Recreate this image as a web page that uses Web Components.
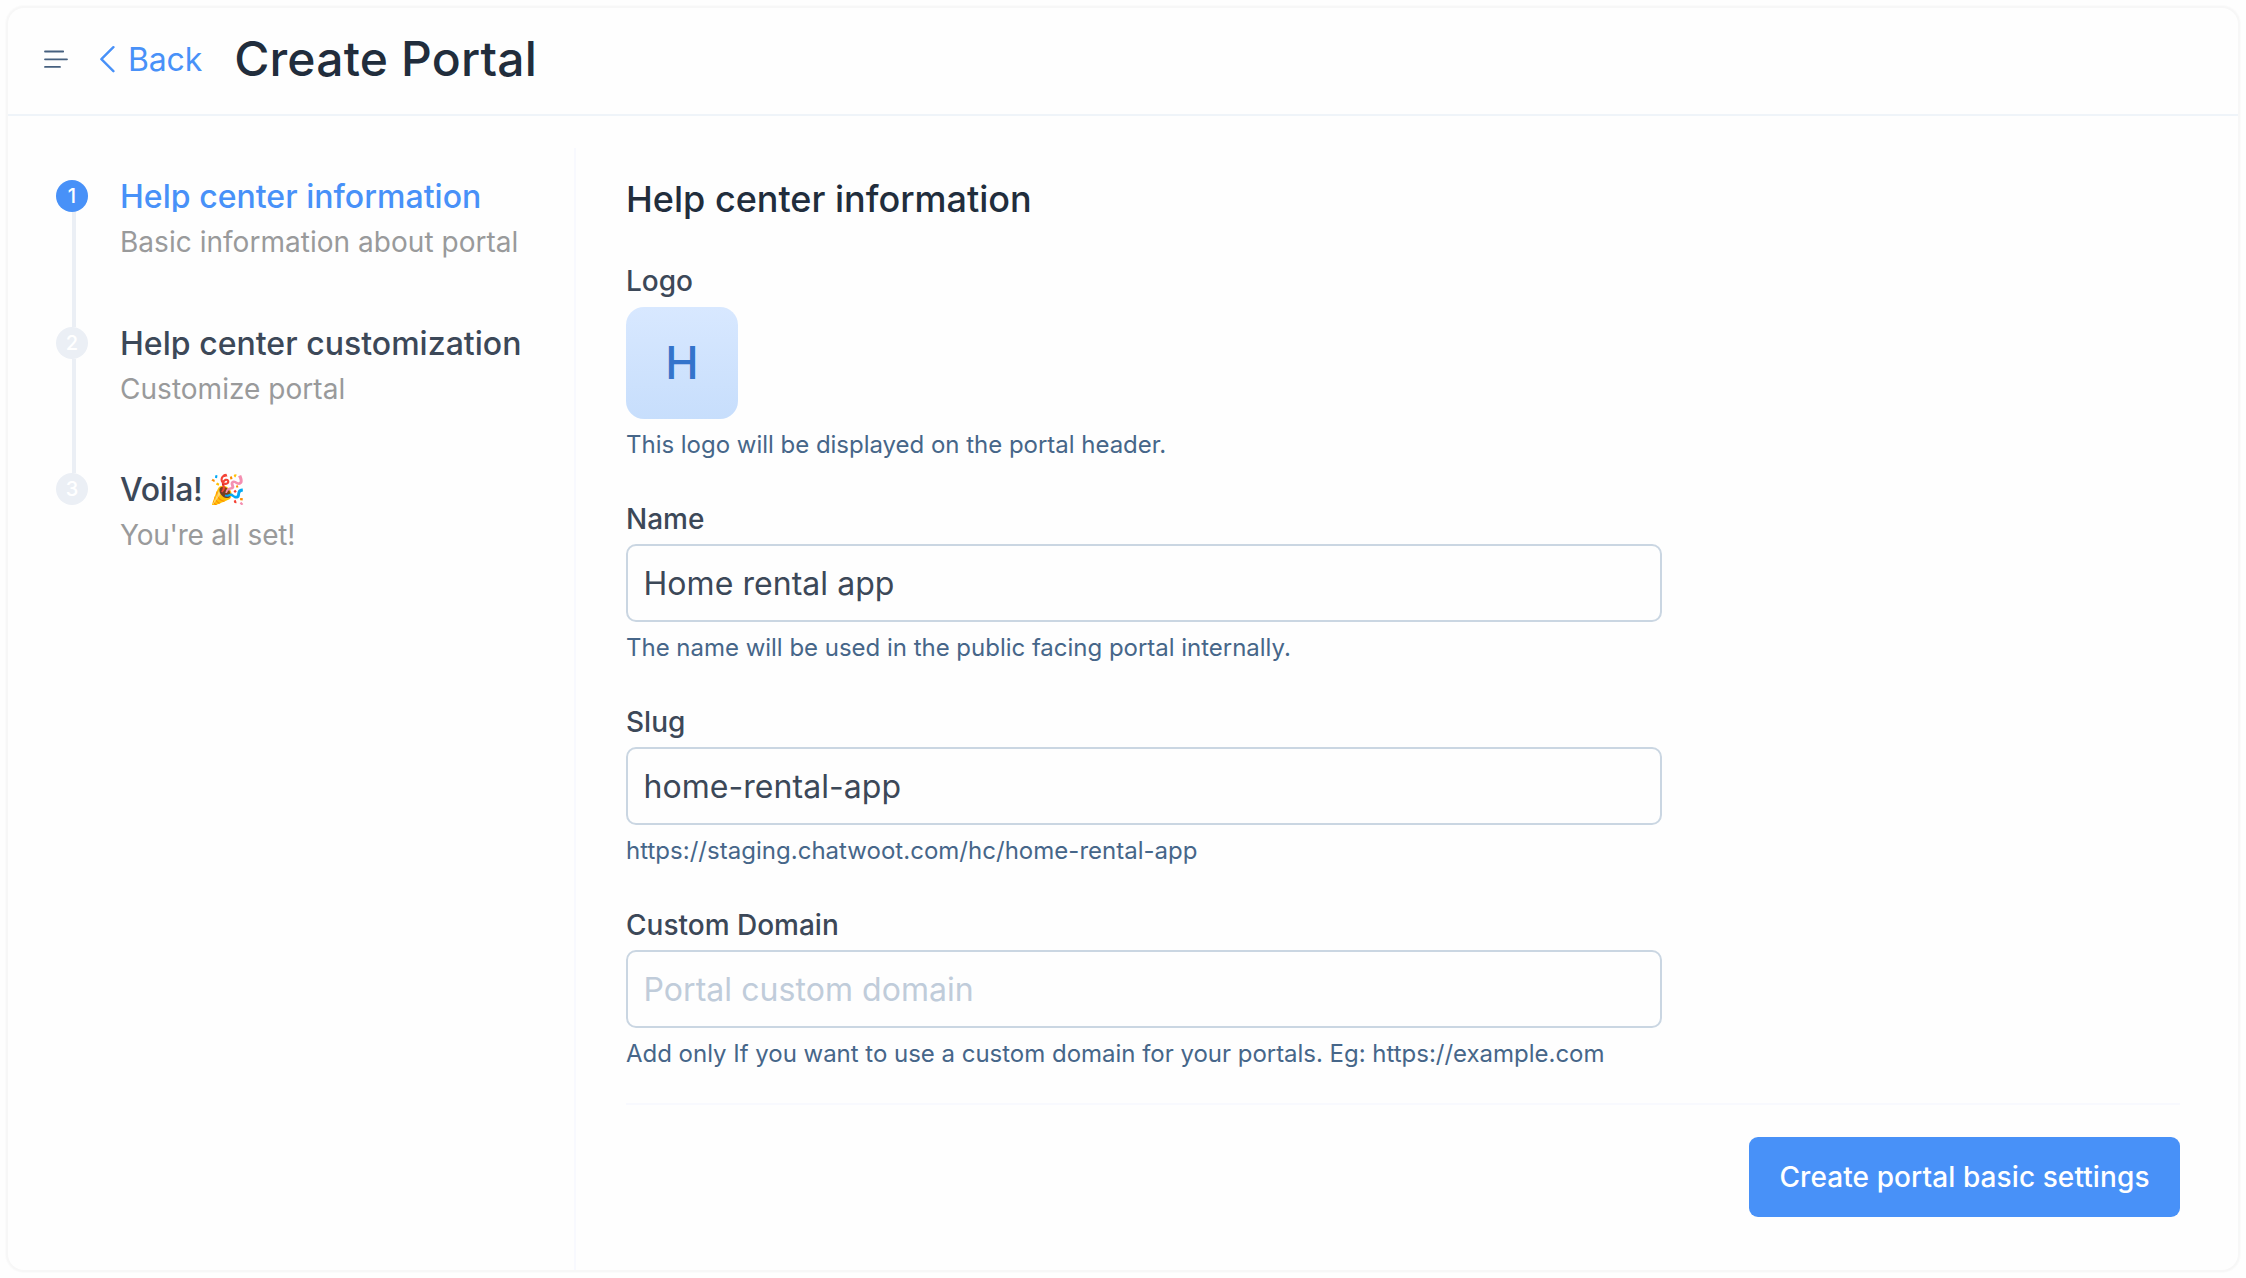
<!DOCTYPE html>
<html lang="en">
<head>
<meta charset="utf-8">
<title>Create Portal</title>
<style>
  html, body { margin: 0; height: 100%; background: #fefefe; }
  body { font-family: Inter, "Liberation Sans", sans-serif; display: flex; padding: 8px; box-sizing: border-box; }
</style>
</head>
<body>
<portal-page>
  <page-header slot="header" back="Back">Create Portal</page-header>
  <step-list slot="steps">
    <wizard-step number="1" active>Help center information<span slot="note">Basic information about portal</span></wizard-step>
    <wizard-step number="2" style="--step-height:146px">Help center customization<span slot="note">Customize portal</span></wizard-step>
    <wizard-step number="3" last><span style="letter-spacing:-.3px">Voila!</span><span style="font-size:29.5px;line-height:1;margin-left:6.5px;vertical-align:1px">🎉</span><span slot="note" style="letter-spacing:-.22px">You're all set!</span></wizard-step>
  </step-list>
  <portal-form heading="Help center information">
    <form-field label="Logo" help="This logo will be displayed on the portal header." style="--label-gap:8px"><logo-avatar>H</logo-avatar></form-field>
    <form-field label="Name" help="The name will be used in the public facing portal internally."><text-box>Home rental app</text-box></form-field>
    <form-field label="Slug" help="https://staging.chatwoot.com/hc/home-rental-app" style="--help-spacing:.02px"><text-box>home-rental-app</text-box></form-field>
    <form-field label="Custom Domain" help="Add only If you want to use a custom domain for your portals. Eg: https://example.com"><text-box empty>Portal custom domain</text-box></form-field>
    <primary-button slot="action">Create portal basic settings</primary-button>
  </portal-form>
</portal-page>
<script>
  const define = (name, render) => customElements.define(name, class extends HTMLElement {
    connectedCallback() {
      if (this.shadowRoot) return;
      this.attachShadow({ mode: 'open' }).innerHTML = render(this);
    }
  });

  define('portal-page', () => `
    <style>
      :host { flex: 1; display: flex; flex-direction: column; box-sizing: border-box; background: #fefefe;
        border-radius: 16px; box-shadow: 0 0 0 2px #f7f7f7, 0 0 0 3px #fbfbfb; overflow: hidden; }
      .body { flex: 1; display: flex; min-height: 0; }
    </style>
    <slot name="header"></slot>
    <div class="body"><slot name="steps"></slot><slot></slot></div>`);

  define('page-header', el => `
    <style>
      :host { display: flex; align-items: center; box-sizing: border-box; height: 108px; flex: none;
        padding: 0 36px 4px; border-bottom: 2px solid #eff4f9; }
      svg { display: block; flex: none; }
      .menu { margin-right: 31px; }
      .back { display: flex; align-items: center; color: #4891f8; font-size: 32px; line-height: 40px; letter-spacing: -.15px; }
      .back span { margin-left: 12px; padding-top: 2px; }
      h1 { margin: 0 0 0 32px; font-size: 48px; font-weight: 500; line-height: 58px; letter-spacing: .18px; color: #212d3c; }
    </style>
    <svg class="menu" width="25" height="20" viewBox="0 0 25 20" fill="none" stroke="#46607f" stroke-width="1.8" stroke-linecap="round">
      <path d="M1 2.5H19.2M1 10.3H23M1 17.9H16"/></svg>
    <div class="back"><svg width="16" height="28" viewBox="0 0 16 28" fill="none" stroke="#4891f8" stroke-width="2.4" stroke-linecap="round" stroke-linejoin="round">
      <path d="M13.4 2.2L1.4 14.2L13.4 26.2"/></svg><span>${el.getAttribute('back')}</span></div>
    <h1><slot></slot></h1>`);

  define('step-list', () => `
    <style>
      :host { display: flex; flex-direction: column; flex: none; box-sizing: border-box; width: 568px;
        margin-top: 32px; padding: 32px 0 0 48px; border-right: 2px solid #f8f9fe; }
    </style>
    <slot></slot>`);

  define('wizard-step', el => {
    const active = el.hasAttribute('active');
    return `
    <style>
      :host { display: flex; gap: 32px; height: var(--step-height, 147px); flex: none; }
      .rail { width: 32px; display: flex; flex-direction: column; flex: none; }
      .dot { width: 32px; height: 32px; border-radius: 50%; display: flex; align-items: center; justify-content: center;
        background: ${active ? '#4891f8' : '#ebeff5'}; color: #fff; font-size: 20px; font-weight: 500; line-height: 32px; }
      .line { flex: 1; width: 4px; margin-left: 16px; background: #ebeff5; display: ${el.hasAttribute('last') ? 'none' : 'block'}; }
      .title { font-size: 32px; font-weight: 500; line-height: 34px; height: 32px; overflow: hidden; white-space: nowrap;
        letter-spacing: .03px; color: ${active ? '#4891f8' : '#3c4858'}; }
      .note { margin-top: 12px; font-size: 28px; line-height: 36px; letter-spacing: .03px; color: #999a9b; white-space: nowrap; }
    </style>
    <div class="rail"><div class="dot">${el.getAttribute('number')}</div><div class="line"></div></div>
    <div><div class="title"><slot></slot></div><div class="note"><slot name="note"></slot></div></div>`;
  });

  define('portal-form', el => `
    <style>
      :host { flex: 1; display: flex; flex-direction: column; padding: 60px 58px 0 50px; }
      h2 { margin: 0 0 40px; font-size: 36px; font-weight: 500; line-height: 46px; color: #212d3c; }
      .fields { display: flex; flex-direction: column; gap: 38px; width: 1036px; }
      .footer { display: flex; justify-content: flex-end; margin-top: 32px; padding-top: 32px; border-top: 2px solid #f8f9fe; }
    </style>
    <h2>${el.getAttribute('heading')}</h2>
    <div class="fields"><slot></slot></div>
    <div class="footer"><slot name="action"></slot></div>`);

  define('form-field', el => `
    <style>
      :host { display: flex; flex-direction: column; align-items: stretch; }
      .label { padding-top: 2px; font-size: 28px; font-weight: 500; line-height: 35px; color: #3c4858; margin-bottom: var(--label-gap, 7px); }
      .help { margin-top: 7px; padding-top: 2px; font-size: 24px; line-height: 34px; color: #466689; white-space: nowrap;
        letter-spacing: var(--help-spacing, -.02px); }
    </style>
    <div class="label">${el.getAttribute('label')}</div>
    <slot></slot>
    <div class="help">${el.getAttribute('help')}</div>`);

  define('text-box', el => `
    <style>
      :host { display: flex; align-items: center; box-sizing: border-box; height: 78px; padding: 2px 15px 0 15.5px; border: 2px solid #cad6e2;
        border-radius: 10px; font-size: 32px; line-height: 40px; letter-spacing: .05px;
        color: ${el.hasAttribute('empty') ? '#c0ccda' : '#3c4858'}; }
    </style>
    <slot></slot>`);

  define('logo-avatar', () => `
    <style>
      :host { display: flex; align-items: center; justify-content: center; width: 112px; height: 112px; border-radius: 18px;
        background: linear-gradient(#d8e8ff, #c7defc); color: #3474cb; font-size: 44.8px; font-weight: 500; line-height: 54px; }
    </style>
    <slot></slot>`);

  define('primary-button', () => `
    <style>
      :host { display: flex; align-items: center; justify-content: center; box-sizing: border-box; width: 431px; height: 80px;
        border-radius: 9px; background: #4891f8; color: #fff; font-size: 28px; font-weight: 500; line-height: 36px; letter-spacing: .09px; }
    </style>
    <slot></slot>`);
</script>
</body>
</html>
